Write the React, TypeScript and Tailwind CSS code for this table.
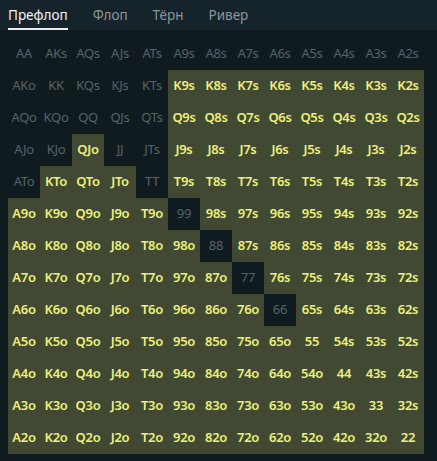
import * as React from 'react';

const RANKS = ['A', 'K', 'Q', 'J', 'T', '9', '8', '7', '6', '5', '4', '3', '2'];

function handName(i: number, j: number) {
  if (i === j) return RANKS[i] + RANKS[j];
  if (j > i) return RANKS[i] + RANKS[j] + 's';
  return RANKS[j] + RANKS[i] + 'o';
}

function isActive(i: number, j: number) {
  if (i === 0) return false;
  if (i === j) return i >= 9;
  if (i === 1 || i === 2) return j >= 5;
  if (i === 3) return j === 2 || j >= 5;
  if (i === 4) return (j >= 1 && j <= 3) || j >= 5;
  return true;
}

const TABS = ['Префлоп', 'Флоп', 'Тёрн', 'Ривер'];

export default function App() {
  return (
    <div className="w-[437px] h-[461px] bg-[#101b1f] font-['Noto_Sans','Open_Sans',sans-serif] overflow-hidden">
      <div className="h-[30px] bg-[#15232a] flex items-end gap-[25px] px-2">
        {TABS.map((t, k) => (
          <div
            key={t}
            className={
              k === 0
                ? 'h-full flex items-center text-[13.5px] text-[#f2f4f5] border-b-[2px] border-[#e8ecee] pt-[2px]'
                : 'h-full flex items-center text-[13.5px] text-[#8b969b] border-b-[2px] border-transparent pt-[2px]'
            }>
            {t}
          </div>
        ))}
      </div>

      <div className="ml-2 mt-2 grid grid-cols-[repeat(13,32px)] auto-rows-[32px]">
        {RANKS.map((_, i) =>
          RANKS.map((__, j) => {
            const on = isActive(i, j);
            return (
              <div
                key={i + '-' + j}
                className={
                  on
                    ? 'flex items-center justify-center bg-[#424933] text-[#eef07c] text-[13px] font-semibold tracking-[-0.3px]'
                    : 'flex items-center justify-center text-[#56636a] text-[13px] tracking-[-0.3px]'
                }>
                {handName(i, j)}
              </div>
            );
          })
        )}
      </div>
    </div>
  );
}
